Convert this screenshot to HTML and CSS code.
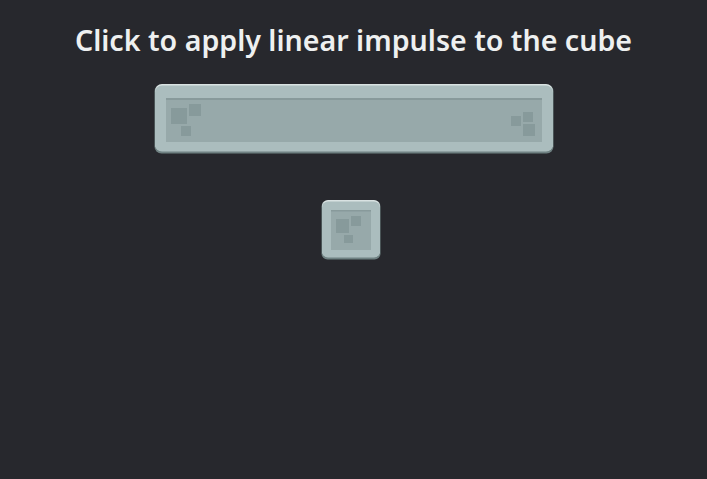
FILE: index.html
```html
<!DOCTYPE html>
<html>
<head>
<meta charset="utf-8">
<link rel="stylesheet" href="styles.css">
</head>
<body>
<div class="scene">
  <h1 class="title">Click to apply linear impulse to the cube</h1>
  <div class="body bar">
    <svg width="400" height="70" viewBox="0 0 400 70">
      <rect x="0.5" y="0.5" width="399" height="69" rx="7" fill="#6f8182"/>
      <rect x="1" y="0" width="398" height="67" rx="7" fill="#d9e2e2"/>
      <rect x="1" y="1.5" width="398" height="66" rx="7" fill="#abbdbe"/>
      <rect x="12" y="14" width="376" height="44" fill="#97a9aa"/>
      <rect x="12" y="14" width="376" height="2" fill="#889a9b"/>
      <rect x="17" y="24" width="16" height="16" fill="#879a9b"/>
      <rect x="35" y="20" width="12" height="12" fill="#879a9b"/>
      <rect x="27" y="42" width="10" height="10" fill="#879a9b"/>
      <rect x="357" y="32" width="10" height="10" fill="#879a9b"/>
      <rect x="369" y="28" width="10" height="10" fill="#879a9b"/>
      <rect x="369" y="40" width="12" height="12" fill="#879a9b"/>
    </svg>
  </div>
  <div class="body cube">
    <svg width="60" height="60" viewBox="0 0 60 60">
      <rect x="0.5" y="0.5" width="59" height="59" rx="6" fill="#6f8182"/>
      <rect x="1" y="0" width="58" height="57" rx="6" fill="#d9e2e2"/>
      <rect x="1" y="1.5" width="58" height="56" rx="6" fill="#abbdbe"/>
      <rect x="10" y="10" width="40" height="40" fill="#97a9aa"/>
      <rect x="10" y="10" width="40" height="1.5" fill="#889a9b"/>
      <rect x="15" y="19" width="13" height="14" fill="#879a9b"/>
      <rect x="30" y="16" width="10" height="10" fill="#879a9b"/>
      <rect x="23" y="35" width="9" height="8" fill="#879a9b"/>
    </svg>
  </div>
</div>
</body>
</html>
```

FILE: styles.css
```css
html, body {
  margin: 0;
  padding: 0;
  background: #27282d;
}
.scene {
  position: relative;
  width: 707px;
  height: 479px;
  overflow: hidden;
}
.title {
  margin: 0;
  padding-top: 21px;
  text-align: center;
  font-family: "Noto Sans", "Open Sans", sans-serif;
  font-weight: 600;
  font-size: 28.6px;
  line-height: 38px;
  color: #eef0f0;
  letter-spacing: 0;
}
.body {
  position: absolute;
  line-height: 0;
}
.body svg {
  display: block;
}
.bar {
  left: 154px;
  top: 84px;
}
.cube {
  left: 321px;
  top: 200px;
}
```
